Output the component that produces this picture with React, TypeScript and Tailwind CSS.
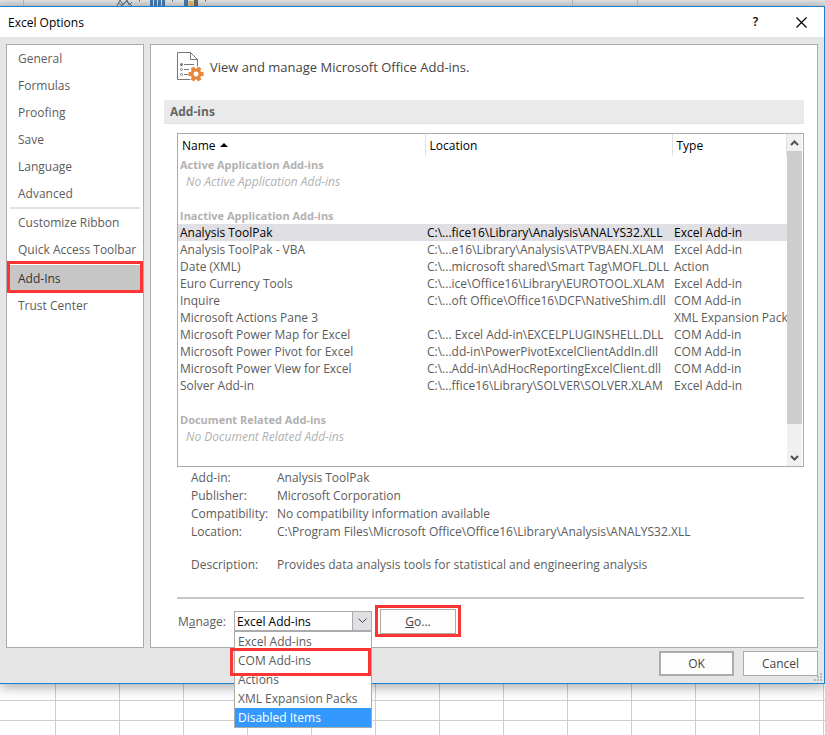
import React from "react";

const navTop = ["General", "Formulas", "Proofing", "Save", "Language", "Advanced"];
const navBottom = ["Customize Ribbon", "Quick Access Toolbar", "Add-Ins", "Trust Center"];

const addIns: [string, string, string][] = [
  ["Analysis ToolPak", "C:\\...fice16\\Library\\Analysis\\ANALYS32.XLL", "Excel Add-in"],
  ["Analysis ToolPak - VBA", "C:\\...e16\\Library\\Analysis\\ATPVBAEN.XLAM", "Excel Add-in"],
  ["Date (XML)", "C:\\...microsoft shared\\Smart Tag\\MOFL.DLL", "Action"],
  ["Euro Currency Tools", "C:\\...ice\\Office16\\Library\\EUROTOOL.XLAM", "Excel Add-in"],
  ["Inquire", "C:\\...oft Office\\Office16\\DCF\\NativeShim.dll", "COM Add-in"],
  ["Microsoft Actions Pane 3", "", "XML Expansion Pack"],
  ["Microsoft Power Map for Excel", "C:\\... Excel Add-in\\EXCELPLUGINSHELL.DLL", "COM Add-in"],
  ["Microsoft Power Pivot for Excel", "C:\\...dd-in\\PowerPivotExcelClientAddIn.dll", "COM Add-in"],
  ["Microsoft Power View for Excel", "C:\\...Add-in\\AdHocReportingExcelClient.dll", "COM Add-in"],
  ["Solver Add-in", "C:\\...ffice16\\Library\\SOLVER\\SOLVER.XLAM", "Excel Add-in"],
];

const details: [string, string][] = [
  ["Add-in:", "Analysis ToolPak"],
  ["Publisher:", "Microsoft Corporation"],
  ["Compatibility:", "No compatibility information available"],
  ["Location:", "C:\\Program Files\\Microsoft Office\\Office16\\Library\\Analysis\\ANALYS32.XLL"],
];

const manageOptions = ["Excel Add-ins", "COM Add-ins", "Actions", "XML Expansion Packs", "Disabled Items"];

function NavItem({ label }: { label: string }) {
  const selected = label === "Add-Ins";
  return (
    <li className={selected ? "relative mt-0.5" : ""}>
      <button
        type="button"
        className={
          selected
            ? "mx-[3px] flex h-[27px] w-[calc(100%-6px)] items-center bg-[#c6c6c6] pl-2 text-[#333]"
            : "flex h-[27px] w-full items-center pl-[11px]"
        }
      >
        {label}
      </button>
      {selected && <span className="pointer-events-none absolute inset-x-0 -top-1 -bottom-px border-3 border-[#fb3434]" />}
    </li>
  );
}

function GroupRow({ children }: { children: string }) {
  return (
    <tr className="h-[17px]">
      <th colSpan={3} scope="colgroup" className="pl-0.5 text-left text-[11px] leading-[17px] font-bold text-[#b1b1b1]">{children}</th>
    </tr>
  );
}

function EmptyRow({ children }: { children?: string }) {
  return (
    <tr className="h-[17px]">
      <td colSpan={3} className="pl-2 italic text-[#b1b1b1]">{children}</td>
    </tr>
  );
}

function AddInsIcon() {
  return (
    <svg width="28" height="32" viewBox="0 0 28 32" aria-hidden="true">
      <path d="M.5.5h13l7 7v20H.5z" fill="#fff" stroke="#777" />
      <path d="M13.500.5v7h7" fill="none" stroke="#777" />
      <path d="M7 12.500h10M7 17.500h5M7 22.500h4" stroke="#777" />
      <circle cx="4.500" cy="12.500" r="1.500" fill="#777" />
      <circle cx="4.500" cy="17.500" r="1" fill="#fff" stroke="#777" />
      <circle cx="4.500" cy="22.500" r="1" fill="#fff" stroke="#777" />
      <circle cx="19" cy="22" r="8" fill="#fff" />
      <g stroke="#e8873a" strokeWidth="4">
        <path d="M19 22h7.500M19 22h-7.500M19 22l3.700 6.500M19 22l-3.700 6.500M19 22l3.700-6.500M19 22l-3.700-6.500" />
      </g>
      <circle cx="19" cy="22" r="5.500" fill="#e8873a" />
      <circle cx="19" cy="22" r="2.500" fill="#fff" />
    </svg>
  );
}

export default function App() {
  return (
    <div className="flex min-h-screen flex-col bg-white font-['Open_Sans','Noto_Sans',sans-serif] text-xs leading-[17px] text-[#5c5c5c]">
      <div className="h-1.5 shrink-0 bg-linear-to-b from-[#e4e4e4] to-[#d2d2d2]">
        <svg className="h-1.5 w-full" aria-hidden="true">
          <path d="M23.500 0v6M572.500 0v6M637.500 0v6" stroke="#bbb" />
          <path d="M117 6l3-6 3 5 4-5 2 5 3-3" fill="none" stroke="#666" />
          <path d="M118 2l4 4 4-5 6 5" fill="none" stroke="#4679ad" />
          <path d="M151.500 0v6M155.500 0v6M159.500 0v6M163.500 0v6" stroke="#4679ad" strokeWidth="3" />
          <path d="M186 0v6" stroke="#4679ad" strokeWidth="4" />
          <path d="M191 1v5" stroke="#e0b268" strokeWidth="5" />
          <path d="M196 0v6" stroke="#666" strokeWidth="4" />
          <path d="M139 0h1M172 0h1M205 0h1" stroke="#666" strokeWidth="3" />
        </svg>
      </div>

      <main className="relative z-10 border-y border-r border-[#1a80cf] bg-[#e6e6e6] shadow-[0_3px_12px_rgba(0,0,0,0.35)]">
        <header className="flex h-[30px] items-center bg-white pl-2 text-black">
          <h1 className="grow">Excel Options</h1>
          <button type="button" aria-label="Help" className="w-[45px] text-xs font-semibold">?</button>
          <button type="button" aria-label="Close" className="flex w-[46px] justify-center">
            <svg width="11" height="11" viewBox="0 0 11 11" aria-hidden="true">
              <path d="M.5.5l10 10M10.500.5l-10 10" stroke="#000" strokeWidth="1.200" />
            </svg>
          </button>
        </header>

        <div className="flex gap-1.5 px-1.5 pt-[7px]">
          <nav aria-label="Option pages" className="w-[138px] shrink-0 border border-[#ababab] bg-white">
            <ul>{navTop.map((n) => <NavItem key={n} label={n} />)}</ul>
            <hr className="mx-[3px] border-t-2 border-[#e3e3e3]" />
            <ul>{navBottom.map((n) => <NavItem key={n} label={n} />)}</ul>
          </nav>

          <section className="min-w-0 grow border border-[#ababab] bg-white px-[13px] pt-[7px] pb-[10px]">
            <div className="flex h-12 items-start gap-[5px] pl-[13px]">
              <AddInsIcon />
              <p className="pt-[7px] text-[13px] text-[#444]">View and manage Microsoft Office Add-ins.</p>
            </div>
            <h2 className="h-6 border-b border-[#e1e1e1] bg-[#eaeaea] pl-1.5 leading-[23px] font-bold text-[#666]">Add-ins</h2>

            <div className="pl-[13px]">
              <div className="mt-[9px] flex border border-[#ababab]">
                <div className="min-w-0 grow pb-[21px]">
                  <table className="w-full table-fixed whitespace-nowrap">
                    <colgroup>
                      <col className="w-[247px]" />
                      <col className="w-[247px]" />
                      <col />
                    </colgroup>
                    <thead>
                      <tr className="h-[22px] text-left text-black">
                        <th scope="col" className="border-r border-[#e1e1e1] pl-1 font-normal">
                          <span className="flex items-center gap-1">
                            Name
                            <svg width="8" height="4" viewBox="0 0 8 4" aria-hidden="true"><path d="M0 4L4 0 8 4z" /></svg>
                          </span>
                        </th>
                        <th scope="col" className="border-r border-[#e1e1e1] pl-1 font-normal">Location</th>
                        <th scope="col" className="border-r border-[#e1e1e1] pl-1 font-normal">Type</th>
                      </tr>
                    </thead>
                    <tbody>
                      <GroupRow>Active Application Add-ins</GroupRow>
                      <EmptyRow>No Active Application Add-ins</EmptyRow>
                      <EmptyRow />
                      <GroupRow>Inactive Application Add-ins</GroupRow>
                      {addIns.map(([name, location, type], i) => (
                        <tr key={name} className={i === 0 ? "h-[17px] bg-[#e0dfe4] text-black" : "h-[17px]"}>
                          <td className="pl-0.5">{name}</td>
                          <td className="pl-0.5">{location}</td>
                          <td className="pl-0.5">{type}</td>
                        </tr>
                      ))}
                      <EmptyRow />
                      <GroupRow>Document Related Add-ins</GroupRow>
                      <EmptyRow>No Document Related Add-ins</EmptyRow>
                    </tbody>
                  </table>
                </div>
                <div className="mr-px flex w-[15px] shrink-0 flex-col bg-[#f0f0f0]" aria-hidden="true">
                  <svg width="15" height="17" viewBox="0 0 15 17"><path d="M4 11l3.500-3.500L11 11" fill="none" stroke="#505050" strokeWidth="2" /></svg>
                  <div className="h-[273px] bg-[#cdcdcd]" />
                  <svg className="mt-auto" width="15" height="17" viewBox="0 0 15 17"><path d="M4 7l3.500 3.500L11 7" fill="none" stroke="#505050" strokeWidth="2" /></svg>
                </div>
              </div>

              <dl className="mt-0.5 grid grid-cols-[86px_1fr] pl-3.5 leading-[18px]">
                {details.map(([k, v]) => (
                  <React.Fragment key={k}>
                    <dt>{k}</dt>
                    <dd>{v}</dd>
                  </React.Fragment>
                ))}
                <dt className="mt-[15px]">Description:</dt>
                <dd className="mt-[15px]">Provides data analysis tools for statistical and engineering analysis</dd>
              </dl>

              <hr className="mt-[23px] border-t-2 border-[#c6c6c6]" />

              <div className="mt-1.5 flex h-8 items-center">
                <label htmlFor="manage" className="w-[57px] pl-px">M<u>a</u>nage:</label>
                <div className="relative w-[138px]">
                  <select id="manage" className="block h-5 w-full appearance-none border border-[#ababab] bg-white pl-0.5 text-black">
                    {manageOptions.map((o) => <option key={o}>{o}</option>)}
                  </select>
                  <span className="pointer-events-none absolute inset-y-0 right-0 flex w-5 items-center justify-center border border-[#ababab] bg-[#e0dfe4]">
                    <svg width="9" height="6" viewBox="0 0 9 6" aria-hidden="true"><path d="M.5.5l4 4 4-4" fill="none" stroke="#444" /></svg>
                  </span>
                  <ul role="listbox" aria-label="Manage" className="absolute top-full left-0 z-20 w-full border border-[#ababab] bg-white leading-[19px]">
                    {manageOptions.map((o) => (
                      <li
                        key={o}
                        role="option"
                        aria-selected={o === "Disabled Items"}
                        className={o === "Disabled Items" ? "bg-[#3399ff] pl-[3px] text-white" : "pl-[3px]"}
                      >
                        {o}
                      </li>
                    ))}
                    <li role="presentation" className="pointer-events-none absolute top-4 right-0 -left-[5px] h-7 border-3 border-[#fb3434]" />
                  </ul>
                </div>
                <div className="ml-[3px] border-3 border-[#fb3434] px-0.5 pt-px">
                  <button type="button" className="block h-[25px] w-[76px] border border-[#ababab] bg-[#fdfdfd] text-[#444]"><u>G</u>o...</button>
                </div>
              </div>
            </div>
          </section>
        </div>

        <footer className="flex h-[35px] justify-end gap-[9px] pt-[3px] pr-1.5 text-[#444]">
          <button type="button" className="h-[25px] w-[75px] border-2 border-[#ababab] bg-[#fdfdfd]">OK</button>
          <button type="button" className="h-[25px] w-[75px] border border-[#ababab] bg-[#fdfdfd]">Cancel</button>
        </footer>
        <svg className="absolute right-0.5 bottom-0.5" width="8" height="8" viewBox="0 0 8 8" fill="#b8b8b8" aria-hidden="true">
          <path d="M6 0h2v2H6zM3 3h2v2H3zM6 3h2v2H6zM0 6h2v2H0zM3 6h2v2H3zM6 6h2v2H6z" />
        </svg>
      </main>

      <div className="h-12 grow overflow-hidden">
        <svg className="h-full w-full" aria-hidden="true">
          <defs>
            <pattern id="cells" x="55" y="16" width="64" height="20" patternUnits="userSpaceOnUse">
              <path d="M.5 0v20M0 .5h64" stroke="#cfcfcf" />
            </pattern>
          </defs>
          <rect width="100%" height="100%" fill="url(#cells)" />
        </svg>
      </div>
    </div>
  );
}
